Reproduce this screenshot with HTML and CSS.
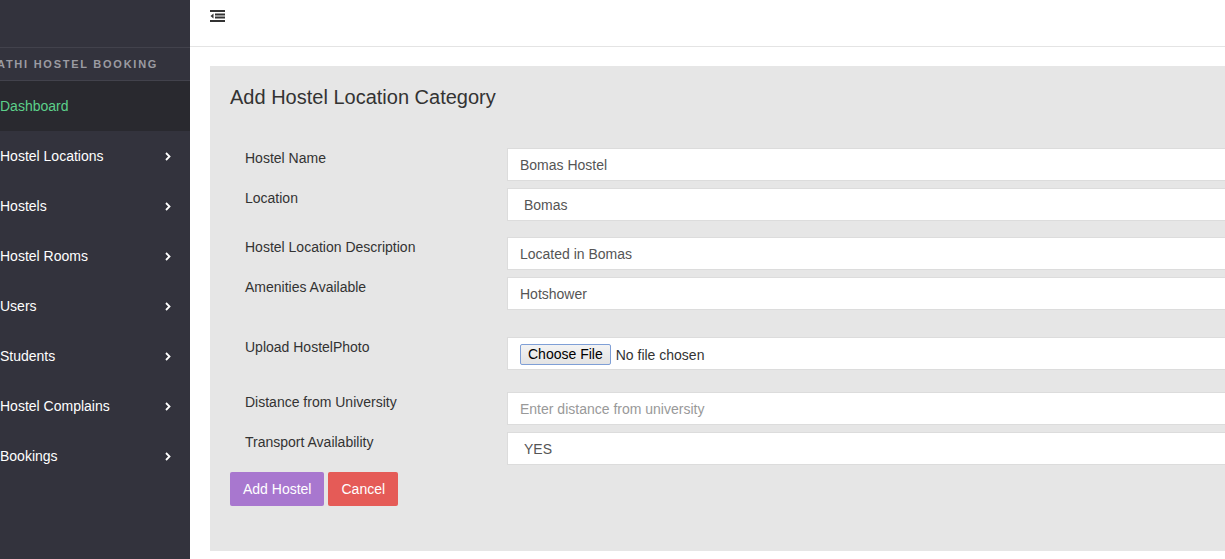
FILE: index.html
```html
<!DOCTYPE html>
<html>
<head>
<meta charset="utf-8">
<title>Add Hostel Location Category</title>
<link rel="stylesheet" href="styles.css">
</head>
<body>
<div class="layout">
  <aside class="sidebar">
    <div class="side-top"></div>
    <div class="brand">ATHI HOSTEL BOOKING</div>
    <nav class="menu">
      <a class="menu-item active">Dashboard</a>
      <a class="menu-item">Hostel Locations <svg class="chev" width="6" height="9" viewBox="0 0 6 9"><path d="M1 1 L4.5 4.5 L1 8" fill="none" stroke="#fff" stroke-width="1.8"/></svg></a>
      <a class="menu-item">Hostels <svg class="chev" width="6" height="9" viewBox="0 0 6 9"><path d="M1 1 L4.5 4.5 L1 8" fill="none" stroke="#fff" stroke-width="1.8"/></svg></a>
      <a class="menu-item">Hostel Rooms <svg class="chev" width="6" height="9" viewBox="0 0 6 9"><path d="M1 1 L4.5 4.5 L1 8" fill="none" stroke="#fff" stroke-width="1.8"/></svg></a>
      <a class="menu-item">Users <svg class="chev" width="6" height="9" viewBox="0 0 6 9"><path d="M1 1 L4.5 4.5 L1 8" fill="none" stroke="#fff" stroke-width="1.8"/></svg></a>
      <a class="menu-item">Students <svg class="chev" width="6" height="9" viewBox="0 0 6 9"><path d="M1 1 L4.5 4.5 L1 8" fill="none" stroke="#fff" stroke-width="1.8"/></svg></a>
      <a class="menu-item">Hostel Complains <svg class="chev" width="6" height="9" viewBox="0 0 6 9"><path d="M1 1 L4.5 4.5 L1 8" fill="none" stroke="#fff" stroke-width="1.8"/></svg></a>
      <a class="menu-item">Bookings <svg class="chev" width="6" height="9" viewBox="0 0 6 9"><path d="M1 1 L4.5 4.5 L1 8" fill="none" stroke="#fff" stroke-width="1.8"/></svg></a>
    </nav>
  </aside>
  <main class="main">
    <header class="topbar">
      <svg class="toggle" width="15" height="12" viewBox="0 0 15 12">
        <rect x="0" y="0" width="15" height="2" fill="#333"/>
        <rect x="5" y="3.5" width="10" height="2" fill="#333"/>
        <rect x="5" y="6.5" width="10" height="2" fill="#333"/>
        <rect x="0" y="10" width="15" height="2" fill="#333"/>
        <path d="M3.5 3.5 L0.5 6 L3.5 8.5 Z" fill="#333"/>
      </svg>
    </header>
    <section class="content">
      <div class="panel">
        <h2 class="panel-title">Add Hostel Location Category</h2>
        <form class="form">
          <div class="row r1">
            <label class="lbl">Hostel Name</label>
            <input class="ctl" type="text" value="Bomas Hostel">
          </div>
          <div class="row r2">
            <label class="lbl">Location</label>
            <input class="ctl sel" type="text" value="Bomas">
          </div>
          <div class="row r3">
            <label class="lbl">Hostel Location Description</label>
            <input class="ctl" type="text" value="Located in Bomas">
          </div>
          <div class="row r4">
            <label class="lbl">Amenities Available</label>
            <input class="ctl" type="text" value="Hotshower">
          </div>
          <div class="row r5">
            <label class="lbl">Upload HostelPhoto</label>
            <div class="ctl file"><span class="file-btn">Choose File</span><span class="file-txt">No file chosen</span></div>
          </div>
          <div class="row r6">
            <label class="lbl">Distance from University</label>
            <input class="ctl" type="text" placeholder="Enter distance from university">
          </div>
          <div class="row r7">
            <label class="lbl">Transport Availability</label>
            <input class="ctl sel" type="text" value="YES">
          </div>
          <div class="actions">
            <button type="button" class="btn btn-add">Add Hostel</button>
            <button type="button" class="btn btn-cancel">Cancel</button>
          </div>
        </form>
      </div>
    </section>
  </main>
</div>
</body>
</html>
```

FILE: styles.css
```css
html, body {
  margin: 0;
  padding: 0;
  overflow: hidden;
  background: #fff;
  font-family: "Liberation Sans", Arial, sans-serif;
  font-size: 14px;
  color: #333;
}

.layout {
  display: flex;
  width: 1400px;
  height: 559px;
}

.sidebar {
  width: 190px;
  flex: 0 0 190px;
  background: #33333d;
  display: flex;
  flex-direction: column;
}

.side-top {
  height: 47px;
  border-bottom: 1px solid #42424c;
}

.brand {
  height: 32px;
  line-height: 32px;
  border-bottom: 1px solid #42424c;
  color: #9b9ba2;
  font-size: 11px;
  font-weight: bold;
  letter-spacing: 1.75px;
  text-indent: -3px;
  white-space: nowrap;
}

.menu {
  display: flex;
  flex-direction: column;
}

.menu-item {
  height: 50px;
  display: flex;
  align-items: center;
  justify-content: space-between;
  padding: 0 19px 0 0;
  color: #fff;
  font-size: 14px;
  white-space: nowrap;
}

.menu-item.active {
  background: #29292f;
  color: #5cd08a;
}

.chev {
  display: block;
  margin-top: 1px;
}

.main {
  flex: 1;
  display: flex;
  flex-direction: column;
}

.topbar {
  height: 47px;
  border-bottom: 1px solid #e4e4e4;
  display: flex;
  align-items: flex-start;
  padding: 10px 0 0 20px;
  box-sizing: border-box;
}

.toggle {
  display: block;
}

.content {
  padding: 19px 0 0 20px;
}

.panel {
  background: #e6e6e6;
  padding: 20px 0 45px 20px;
}

.panel-title {
  margin: 0;
  font-size: 20px;
  font-weight: normal;
  line-height: 22px;
  color: #333;
}

.form {
  margin-top: 40px;
  display: flex;
  flex-direction: column;
}

.row {
  display: flex;
  align-items: flex-start;
}

.r2, .r4, .r7 { margin-top: 7px; }
.r3 { margin-top: 16px; }
.r5 { margin-top: 27px; }
.r6 { margin-top: 22px; }

.lbl {
  width: 262px;
  flex: 0 0 262px;
  padding-left: 15px;
  line-height: 20px;
  color: #333;
}

.ctl {
  flex: 1;
  height: 33px;
  box-sizing: border-box;
  border: 1px solid #dcdcdc;
  background: #fff;
  padding: 0 12px;
  font-family: "Liberation Sans", Arial, sans-serif;
  font-size: 14px;
  color: #555;
  outline: none;
  margin: 0;
}

.ctl::placeholder {
  color: #999;
}

.ctl.sel {
  padding-left: 16px;
}

.file {
  display: flex;
  align-items: center;
}

.file-btn {
  height: 21px;
  box-sizing: border-box;
  border: 1px solid #7f9fd6;
  border-radius: 2px;
  background: linear-gradient(#f3f3f3, #e3e3e3);
  color: #000;
  padding: 0 7px;
  line-height: 19px;
  font-size: 14px;
  margin-top: 2px;
}

.file-txt {
  margin-left: 5px;
  color: #333;
  margin-top: 2px;
}

.actions {
  margin-top: 7px;
  display: flex;
  gap: 4px;
}

.btn {
  height: 34px;
  border: none;
  border-radius: 2px;
  color: #fff;
  font-family: "Liberation Sans", Arial, sans-serif;
  font-size: 14px;
  padding: 0 13px;
  margin: 0;
  white-space: nowrap;
}

.btn-add {
  background: #a877cf;
}

.btn-cancel {
  background: #e55b57;
}
```
